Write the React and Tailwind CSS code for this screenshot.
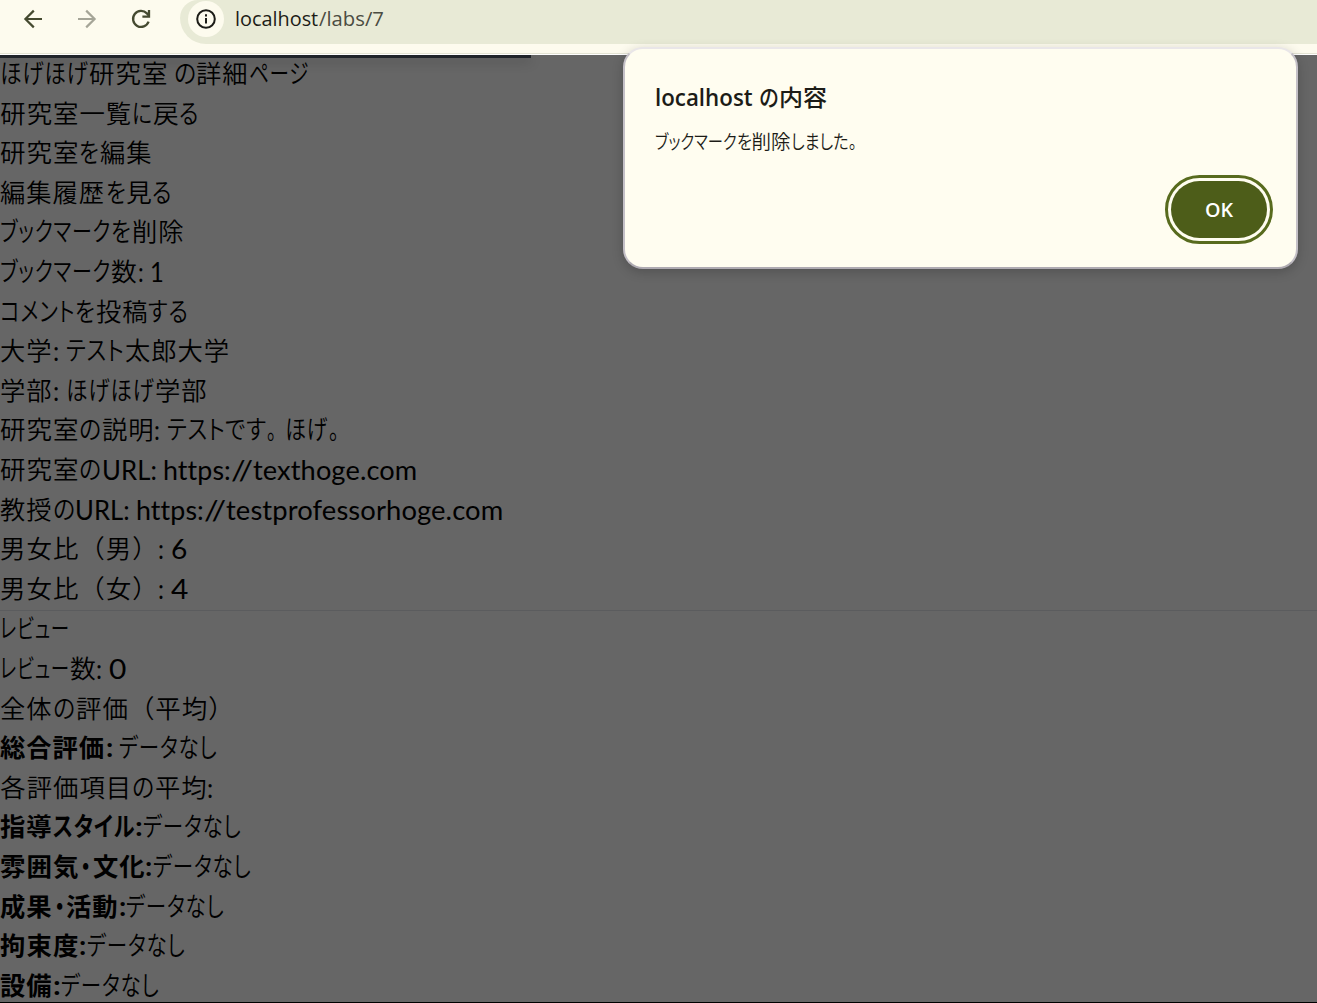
import { useLayoutEffect, useRef } from 'react';

// Each run is [text, width in px, bold]
const labRows = [
  [['ほげほげ', 88.5], ['研究室', 79.2], [' ', 6], ['の', 22.5], ['詳細', 52.8], ['ページ', 60]],
  [['研究室一覧', 132], ['に', 20.5], ['戻', 26.4], ['る', 20.5]],
  [['研究室', 79.2], ['を', 20.3], ['編集', 52.8]],
  [['編集履歴', 105.6], ['を', 20.3], ['見', 26.4], ['る', 20.5]],
  [['ブックマーク', 111.2], ['を', 20.3], ['削除', 52.8]],
  [['ブックマーク', 111.2], ['数', 26.4], [': ', 12], ['1', 13.5]],
  [['コメント', 75.3], ['を', 20.3], ['投稿', 52.8], ['する', 41]],
  [['大学', 52.8], [': ', 13.2], ['テスト', 58.5], ['太郎大学', 105.6]],
  [['学部', 52.8], [': ', 13.2], ['ほげほげ', 88.5], ['学部', 52.8]],
  [['研究室', 79.2], ['の', 22.5], ['説明', 52.8], [': ', 12.5], ['テスト', 58.5], ['です', 41.5], ['。', 18.5], ['ほげ', 43.5], ['。', 20]],
  [['研究室', 79.2], ['の', 22.5], ['URL: ', 61.3], ['https:', 68], ['//', 22], ['texthoge.com', 164]],
  [['教授', 52.8], ['の', 22.5], ['URL: ', 61.2], ['https:', 68], ['//', 22], ['testprofessorhoge.com', 277]],
  [['男女比（男）', 158.4], [': ', 12.6], ['6', 16]],
  [['男女比（女）', 158.4], [': ', 12.6], ['4', 17]],
];

const reviewRows = [
  [['レビュー', 70]],
  [['レビュー', 70], ['数', 26.4], [': ', 12.8], ['0', 17]],
  [['全体', 52.8], ['の', 22.5], ['評価（平均）', 158.4]],
  [['総合評価', 105.6, true], [':', 7.5, true], [' ', 6], ['データなし', 98.5]],
  [['各評価項目', 132], ['の', 22.5], ['平均', 52.8], [':', 6.5]],
  [['指導', 52.8, true], ['スタイル', 82, true], [':', 8, true], ['データなし', 98.5]],
  [['雰囲気', 79.2, true], ['・', 13.4, true], ['文化', 52.8, true], [':', 7.5, true], ['データなし', 98.5]],
  [['成果', 52.8, true], ['・', 13.4, true], ['活動', 52.8, true], [':', 7.5, true], ['データなし', 98.5]],
  [['拘束度', 79.2, true], [':', 7.5, true], ['データなし', 98.5]],
  [['設備', 52.8, true], [':', 8, true], ['データなし', 98.5]],
];

// Kana is set proportionally, kanji on a slightly loose full-width grid
function runStyle(text, bold) {
  if (text === '。') return 'font-[350] -top-px';
  if (text === '・') return 'font-bold [font-feature-settings:"palt"] px-[2px] -top-px';
  if (/^[\u3041-\u30ff]/.test(text)) {
    return `${bold ? 'font-bold' : 'font-[350]'} [font-feature-settings:"palt"] tracking-[1px] -top-px`;
  }
  if (/^[\u4e00-\u9fff]/.test(text)) {
    return `${bold ? 'font-bold' : 'font-[350]'} text-[25.4px] tracking-[1px] -top-px left-[0.3px]`;
  }
  return bold ? 'font-bold -top-px' : 'tracking-[0.1px]';
}

// Text condensed or stretched horizontally to a given width
function Run({ text, width, className = '' }) {
  const ref = useRef(null);

  useLayoutEffect(() => {
    const el = ref.current;
    el.style.transform = `scaleX(${width / el.offsetWidth})`;
  }, [text, width]);

  return (
    <span className="inline-block shrink-0 whitespace-pre" style={{ width }}>
      <span ref={ref} className={`relative inline-block origin-left ${className}`}>{text}</span>
    </span>
  );
}

function Rows({ rows }) {
  return rows.map((row, i) => (
    <div key={i} className="flex h-[39.6px] items-baseline whitespace-nowrap">
      {row.map(([text, width, bold], j) => (
        <Run key={j} text={text} width={width} className={runStyle(text, bold)} />
      ))}
    </div>
  ));
}

function Toolbar() {
  return (
    <header className="flex h-[55px] items-start border-b border-white bg-[#fdfbee]">
      <div className="flex h-[54px] w-full items-start border-b border-[#e4e4d4]">
        <div className="flex h-[38px] w-[180px] shrink-0 items-center text-[#454a30]">
          <svg className="ml-[23px] size-5" viewBox="0 0 20 20" fill="none" stroke="currentColor" strokeWidth="2.2">
            <path d="M19 10H3M10.8 1.6 2.4 10l8.4 8.4" />
          </svg>
          <svg className="ml-[34px] size-5 text-[#a5a597]" viewBox="0 0 20 20" fill="none" stroke="currentColor" strokeWidth="2.2">
            <path d="M1 10h16M9.2 1.6l8.4 8.4-8.4 8.4" />
          </svg>
          <svg className="ml-[34px] size-5" viewBox="0 0 20 20" fill="none" stroke="currentColor" strokeWidth="2.3">
            <path d="M17.6 12.6A8 8 0 1 1 15.9 4.4L18 6.6" />
            <path d="M18 1v6.6h-6.6" />
          </svg>
        </div>
        <div className="flex h-[44px] flex-1 items-start rounded-bl-[26px] rounded-tl-[18px] bg-[#e8ead6]">
          <div className="ml-[8px] mt-px flex size-9 shrink-0 items-center justify-center rounded-full bg-[#fdfbee]">
            <svg className="size-[20px]" viewBox="0 0 20 20" fill="none" stroke="#1c1c17" strokeWidth="2">
              <circle cx="10" cy="10" r="8.8" />
              <path d="M10 9v5.4M10 5.3v2.2" />
            </svg>
          </div>
          <div className="ml-[11px] mt-[5px] flex font-['Open_Sans','Noto_Sans',sans-serif] text-[19.5px] leading-[28px]">
            <Run text="localhost" width={83.5} className="text-[#1c1c17]" />
            <Run text="/labs/7" width={64.5} className="text-[#4b4c42]" />
          </div>
        </div>
      </div>
    </header>
  );
}

function AlertDialog() {
  return (
    <div
      role="alertdialog"
      className="absolute left-[623px] top-[47px] flex h-[222px] w-[675px] flex-col rounded-[20px] border-2 border-[#c4c0c7] border-b-[#aeaab1] border-t-[#e9e6e8] bg-[#fffdf0] pl-[30px] pr-[23px] pt-[31px] font-['Open_Sans','Noto_Sans_CJK_JP',sans-serif] text-[#1c1c17] shadow-[0_3px_12px_rgba(0,0,0,0.2)]"
    >
      <h2 className="flex h-8 items-baseline text-[23px] font-semibold leading-8">
        <Run text="localhost" width={98} />
        <Run text=" " width={6} />
        <Run text="の" width={20} className="font-['Noto_Sans_CJK_JP',sans-serif] font-medium" />
        <Run text="内容" width={48} className="font-['Noto_Sans_CJK_JP',sans-serif] font-medium" />
      </h2>
      <p className="mt-[15px] flex h-7 items-baseline font-['Noto_Sans_CJK_JP',sans-serif] text-[19.5px] font-[350] leading-7">
        <Run text="ブックマーク" width={81.5} className='[font-feature-settings:"palt"]' />
        <Run text="を" width={15} className='[font-feature-settings:"palt"]' />
        <Run text="削除" width={39} />
        <Run text="しました" width={58} className='[font-feature-settings:"palt"]' />
        <Run text="。" width={16} />
      </p>
      <button className="mr-[6px] mt-[26px] flex h-[57px] w-24 items-center justify-center self-end rounded-full bg-[#4d5d19] pt-px text-[19px] font-semibold text-white outline-3 outline-offset-3 outline-[#586b1e]">
        <Run text="OK" width={28} />
      </button>
    </div>
  );
}

export default function App() {
  return (
    <div className="relative h-[1003px] w-full overflow-hidden bg-[#666666]">
      <Toolbar />
      <main className="relative h-[948px] overflow-hidden border-b border-black font-['Lato','Noto_Sans_CJK_JP',sans-serif] text-[26.4px] leading-[39.6px] text-black">
        <div className="absolute left-0 top-0 h-[3px] w-[531px] bg-[#20242a] shadow-[0_3px_12px_rgba(0,0,0,0.3)]" />
        <section className="h-[555px]">
          <Rows rows={labRows} />
        </section>
        <section className="border-t border-[#5b5c5e]">
          <div className="-mt-[0.6px]">
            <Rows rows={reviewRows} />
          </div>
        </section>
      </main>
      <AlertDialog />
    </div>
  );
}
